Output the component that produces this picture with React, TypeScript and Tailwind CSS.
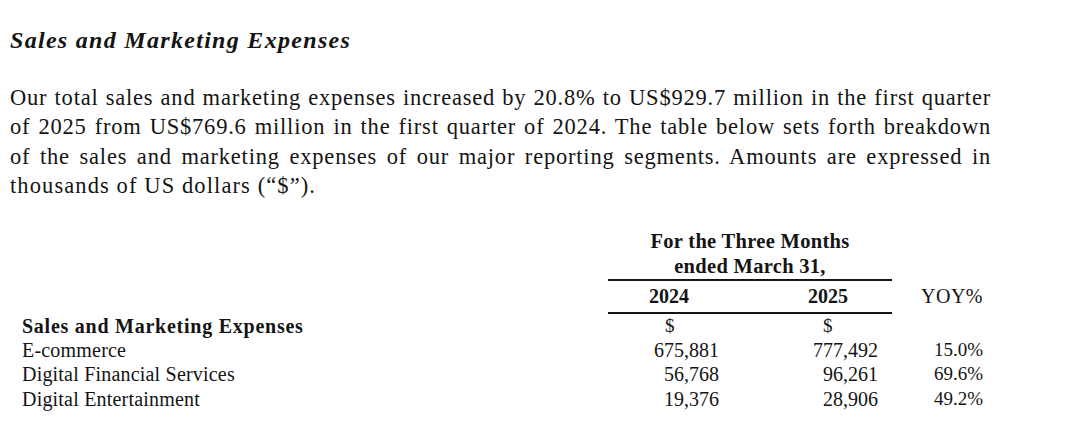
const paragraphLines = [
  "Our total sales and marketing expenses increased by 20.8% to US$929.7 million in the first quarter",
  "of 2025 from US$769.6 million in the first quarter of 2024. The table below sets forth breakdown",
  "of the sales and marketing expenses of our major reporting segments. Amounts are expressed in",
];

const rows = [
  { label: "E-commerce", y2024: "675,881", y2025: "777,492", yoy: "15.0%" },
  { label: "Digital Financial Services", y2024: "56,768", y2025: "96,261", yoy: "69.6%" },
  { label: "Digital Entertainment", y2024: "19,376", y2025: "28,906", yoy: "49.2%" },
];

export default function App() {
  return (
    <div className="w-[1080px] h-[441px] overflow-hidden bg-white pl-[10px] pt-[26px] text-[#141414] font-['Liberation_Serif',serif]">
      <h2 className="text-[24px] leading-[28px] font-bold italic tracking-[1.3px]">Sales and Marketing Expenses</h2>

      {/* Paragraph, justified line by line */}
      <div className="mt-[29px] w-[981px] text-[22.5px] leading-[29.4px] tracking-[0.8px]">
        {paragraphLines.map((line) => (
          <div key={line} className="text-justify [text-align-last:justify] whitespace-nowrap">
            {line}
          </div>
        ))}
        <div className="tracking-[1.1px]">thousands of US dollars (“$”).</div>
      </div>

      {/* Table */}
      <div className="mt-[28px] ml-[12px] grid grid-cols-[586px_142px_142px_91px] text-[19px]">
        <div />
        <div className="col-span-2 border-b-2 border-[#141414] text-center font-bold leading-[25px] text-[20.5px] tracking-[0.3px]">
          <div>For the Three Months</div>
          <div>ended March 31,</div>
        </div>
        <div />

        <div />
        <div className="border-b-2 border-[#141414] pl-[41px] font-bold leading-[31px] text-[20px]">2024</div>
        <div className="border-b-2 border-[#141414] pl-[58px] font-bold leading-[31px] text-[20px]">2025</div>
        <div className="text-right leading-[31px] text-[20px] tracking-[0.5px]">YOY%</div>

        <div className="font-bold leading-[24px] text-[20px] tracking-[0.75px]">Sales and Marketing Expenses</div>
        <div className="pl-[57px] leading-[24px]">$</div>
        <div className="pl-[73px] leading-[24px]">$</div>
        <div />

        {rows.map((r) => (
          <div key={r.label} className="contents">
            <div className="leading-[24.5px] text-[20px] tracking-[0.2px]">{r.label}</div>
            <div className="pr-[31px] text-right leading-[24.5px] text-[20px]">{r.y2024}</div>
            <div className="pr-[14px] text-right leading-[24.5px] text-[20px]">{r.y2025}</div>
            <div className="text-right leading-[24.5px]">{r.yoy}</div>
          </div>
        ))}
      </div>
    </div>
  );
}
